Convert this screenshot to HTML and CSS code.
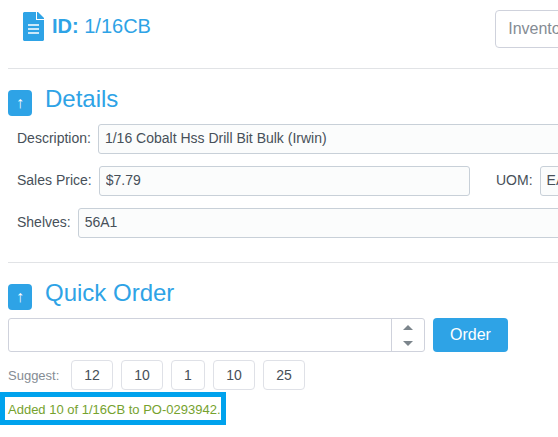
FILE: index.html
```html
<!doctype html>
<html lang="en">
<head>
    <title>1/16CB</title>
    <meta charset="utf-8">
    <link rel="stylesheet" href="styles.css">
</head>
<body>
    <header class="page-header">
        <h1 class="item-title">
            <svg class="file-icon" viewBox="0 0 21 29" aria-hidden="true">
                <path d="M1 0h12v8h8v20l-1 1H1l-1-1V1z"/>
                <path d="M14 0h1l6 6v1h-7z"/>
                <path class="lines" d="M5 13h11M5 17h11M5 21h11"/>
            </svg>
            <span><b>ID:</b> 1/16CB</span>
        </h1>
        <button class="btn-inventory" type="button">Inventory</button>
    </header>

    <section class="details">
        <div class="section-title">
            <button class="toggle" type="button" aria-label="Collapse details">↑</button>
            <h2>Details</h2>
        </div>
        <div class="field-list">
            <div class="field-row">
                <label for="description">Description:</label>
                <input id="description" type="text" value="1/16 Cobalt Hss Drill Bit Bulk (Irwin)" readonly>
            </div>
            <div class="field-row">
                <label for="price">Sales Price:</label>
                <input id="price" type="text" value="$7.79" readonly>
                <div class="uom">
                    <label for="uom">UOM:</label>
                    <input id="uom" type="text" value="EA" readonly>
                </div>
            </div>
            <div class="field-row">
                <label for="shelves">Shelves:</label>
                <input id="shelves" type="text" value="56A1" readonly>
            </div>
        </div>
    </section>

    <section class="quick-order">
        <div class="section-title">
            <button class="toggle" type="button" aria-label="Collapse quick order">↑</button>
            <h2>Quick Order</h2>
        </div>
        <div class="order-row">
            <div class="quantity">
                <input type="text" inputmode="numeric" aria-label="Quantity">
                <div class="spinner">
                    <button type="button" aria-label="Increase"><span class="arrow-up"></span></button>
                    <button type="button" aria-label="Decrease"><span class="arrow-down"></span></button>
                </div>
            </div>
            <button class="btn-order" type="button">Order</button>
        </div>
        <div class="suggest-row">
            <span>Suggest:</span>
            <button type="button">12</button>
            <button type="button">10</button>
            <button type="button">1</button>
            <button type="button">10</button>
            <button type="button">25</button>
        </div>
    </section>
    <p class="message">Added 10 of 1/16CB to PO-0293942.</p>
</body>
</html>
```
FILE: styles.css
```css
* {
    margin: 0;
    padding: 0;
    box-sizing: border-box;
    font-family: "Liberation Sans", Arial, sans-serif;
}

body {
    background: #ffffff;
    color: #475059;
    font-size: 14px;
    overflow-x: hidden;
}

button {
    cursor: pointer;
}

.page-header {
    display: flex;
    justify-content: space-between;
    align-items: flex-start;
    margin-left: 8px;
    padding: 10px 0 20px 15px;
    border-bottom: 1px solid #e1e3e6;
}

.item-title {
    display: flex;
    align-items: center;
    gap: 8px;
    height: 32px;
    color: #2ea3e6;
    font-size: 20px;
    font-weight: normal;
}

.file-icon {
    width: 21px;
    height: 29px;
    fill: #2ea3e6;
}

.file-icon .lines {
    fill: none;
    stroke: #ffffff;
    stroke-width: 1.6;
}

.btn-inventory {
    height: 38px;
    margin-right: -29px;
    padding: 0 12px;
    background: #ffffff;
    border: 1px solid #cfd2dc;
    border-radius: 4px;
    color: #858c94;
    font-size: 16px;
}

.details {
    margin-left: 8px;
    padding: 16px 0 24px;
    border-bottom: 1px solid #e1e3e6;
}

.section-title {
    display: flex;
    align-items: flex-end;
    gap: 13px;
    height: 31px;
}

.section-title h2 {
    height: 31px;
    color: #2ea3e6;
    font-size: 24px;
    font-weight: normal;
    line-height: 28px;
}

.toggle {
    width: 24px;
    height: 26px;
    background: #2ea3e6;
    border: none;
    border-radius: 4px;
    color: #ffffff;
    font-size: 16px;
}

.field-list {
    display: flex;
    flex-direction: column;
    gap: 12px;
    margin: 8px -20px 0 9px;
}

.field-row,
.uom {
    display: flex;
    align-items: center;
    gap: 7px;
}

.field-row input {
    flex: 1;
    min-width: 0;
    height: 30px;
    padding: 0 6px 2px;
    background: #fbfcfc;
    border: 1px solid #c8d0d8;
    border-radius: 3px;
    color: #475059;
    font-size: 14px;
}

.field-row label {
    padding-bottom: 2px;
}

.field-row .uom {
    width: 82px;
    margin-left: 19px;
}

.quick-order {
    padding: 16px 8px 0;
}

.order-row {
    display: flex;
    gap: 8px;
    max-width: 500px;
    margin-top: 8px;
}

.quantity {
    display: flex;
    flex: 1;
    height: 34px;
    border: 1px solid #cfd2dc;
    border-radius: 3px;
}

.quantity input {
    flex: 1;
    min-width: 0;
    padding: 0 8px;
    background: none;
    border: none;
    font-size: 14px;
}

.spinner {
    display: flex;
    flex-direction: column;
    width: 33px;
    border-left: 1px solid #cfd2dc;
}

.spinner button {
    display: flex;
    flex: 1;
    justify-content: center;
    align-items: center;
    background: none;
    border: none;
}

.arrow-up,
.arrow-down {
    border: 5px solid transparent;
}

.arrow-up {
    border-top: none;
    border-bottom-color: #7c858c;
}

.arrow-down {
    border-bottom: none;
    border-top-color: #7c858c;
}

.btn-order {
    width: 75px;
    height: 34px;
    background: #2ea3e6;
    border: none;
    border-radius: 4px;
    color: #ffffff;
    font-size: 16px;
}

.suggest-row {
    display: grid;
    grid-template-columns: 55px 42px 42px 34px 42px 42px;
    align-items: center;
    gap: 8px;
    margin-top: 8px;
}

.suggest-row span {
    color: #858c94;
    font-size: 13px;
}

.suggest-row button {
    height: 30px;
    background: #ffffff;
    border: 1px solid #dfe1e7;
    border-radius: 4px;
    color: #475059;
    font-size: 14px;
}

.message {
    width: fit-content;
    margin-top: 2px;
    padding: 5px 0 3px 3px;
    border: 5px solid #00a2ed;
    color: #76a22e;
    font-size: 13px;
}
```
